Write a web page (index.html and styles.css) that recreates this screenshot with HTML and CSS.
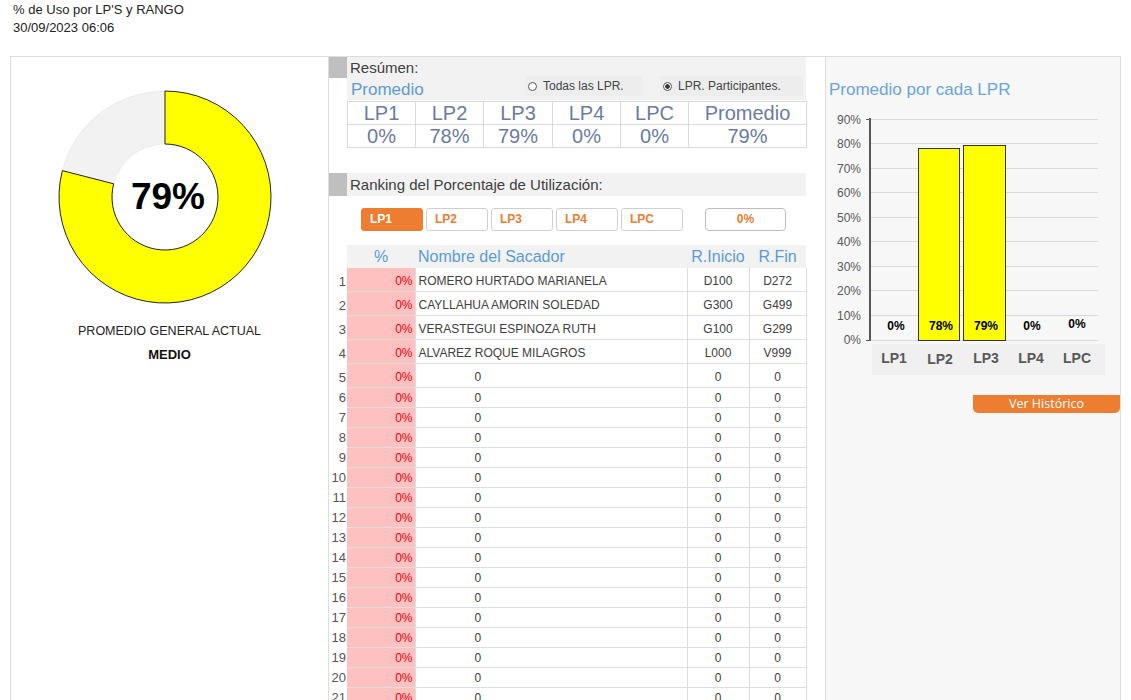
FILE: index.html
```html
<!DOCTYPE html>
<html lang="es">
<head>
<meta charset="utf-8">
<title>% de Uso por LP'S y RANGO</title>
<link rel="stylesheet" href="styles.css">
</head>
<body>
<div class="top">
  <div>% de Uso por LP'S y RANGO</div>
  <div>30/09/2023 06:06</div>
</div>
<div class="board">
  <div class="left">
    <div class="donut-wrap">
      <svg class="donut" width="216" height="216" viewBox="-1 -1 216 216">
        <path d="M4.33,80.64 A106,106 0 0 1 107,1 L107,54 A53,53 0 0 0 55.66,93.82 Z" fill="#f2f2f2" stroke="#e4e4e4" stroke-width="0.6"/>
        <path d="M107,1 A106,106 0 1 1 4.33,80.64 L55.66,93.82 A53,53 0 1 0 107,54 Z" fill="#ffff00" stroke="#222" stroke-width="1"/>
      </svg>
      <div class="donut-val">79%</div>
    </div>
    <div class="lbl1">PROMEDIO GENERAL ACTUAL</div>
    <div class="lbl2">MEDIO</div>
  </div>

  <div class="mid">
    <div class="sec-head">
      <div class="stripe"></div>
      <div class="sec-title">Resúmen:</div>
    </div>
    <div class="sub">
      <div class="prom-label">Promedio</div>
      <div class="radio-box rb1"><span class="radio"></span>Todas las LPR.</div>
      <div class="radio-box rb2"><span class="radio checked"></span>LPR. Participantes.</div>
    </div>
    <table class="summary">
      <colgroup>
        <col class="s1"><col class="s1"><col class="s2"><col class="s1"><col class="s1"><col class="s3">
      </colgroup>
      <tr><td>LP1</td><td>LP2</td><td>LP3</td><td>LP4</td><td>LPC</td><td>Promedio</td></tr>
      <tr><td>0%</td><td>78%</td><td>79%</td><td>0%</td><td>0%</td><td>79%</td></tr>
    </table>

    <div class="sec-head rank-head">
      <div class="stripe"></div>
      <div class="sec-title">Ranking del Porcentaje de Utilización:</div>
    </div>
    <div class="btns">
      <div class="btn active">LP1</div>
      <div class="btn">LP2</div>
      <div class="btn">LP3</div>
      <div class="btn">LP4</div>
      <div class="btn">LPC</div>
      <div class="btn total">0%</div>
    </div>

    <table class="rank">
      <colgroup>
        <col class="c-idx"><col class="c-pct"><col class="c-name"><col class="c-ri"><col class="c-rf">
      </colgroup>
      <tr class="head">
        <th class="idx"></th><th class="h-pct">%</th><th class="h-name">Nombre del Sacador</th><th>R.Inicio</th><th>R.Fin</th>
      </tr>
      <tr class="tall"><td class="idx">1</td><td class="pct">0%</td><td class="name">ROMERO HURTADO MARIANELA</td><td class="rc">D100</td><td class="rc">D272</td></tr>
      <tr class="tall"><td class="idx">2</td><td class="pct">0%</td><td class="name">CAYLLAHUA AMORIN SOLEDAD</td><td class="rc">G300</td><td class="rc">G499</td></tr>
      <tr class="tall"><td class="idx">3</td><td class="pct">0%</td><td class="name">VERASTEGUI ESPINOZA RUTH</td><td class="rc">G100</td><td class="rc">G299</td></tr>
      <tr class="tall"><td class="idx">4</td><td class="pct">0%</td><td class="name">ALVAREZ ROQUE MILAGROS</td><td class="rc">L000</td><td class="rc">V999</td></tr>
      <tr class="tall"><td class="idx">5</td><td class="pct">0%</td><td class="name empty">0</td><td class="rc">0</td><td class="rc">0</td></tr>
      <tr><td class="idx">6</td><td class="pct">0%</td><td class="name empty">0</td><td class="rc">0</td><td class="rc">0</td></tr>
      <tr><td class="idx">7</td><td class="pct">0%</td><td class="name empty">0</td><td class="rc">0</td><td class="rc">0</td></tr>
      <tr><td class="idx">8</td><td class="pct">0%</td><td class="name empty">0</td><td class="rc">0</td><td class="rc">0</td></tr>
      <tr><td class="idx">9</td><td class="pct">0%</td><td class="name empty">0</td><td class="rc">0</td><td class="rc">0</td></tr>
      <tr><td class="idx">10</td><td class="pct">0%</td><td class="name empty">0</td><td class="rc">0</td><td class="rc">0</td></tr>
      <tr><td class="idx">11</td><td class="pct">0%</td><td class="name empty">0</td><td class="rc">0</td><td class="rc">0</td></tr>
      <tr><td class="idx">12</td><td class="pct">0%</td><td class="name empty">0</td><td class="rc">0</td><td class="rc">0</td></tr>
      <tr><td class="idx">13</td><td class="pct">0%</td><td class="name empty">0</td><td class="rc">0</td><td class="rc">0</td></tr>
      <tr><td class="idx">14</td><td class="pct">0%</td><td class="name empty">0</td><td class="rc">0</td><td class="rc">0</td></tr>
      <tr><td class="idx">15</td><td class="pct">0%</td><td class="name empty">0</td><td class="rc">0</td><td class="rc">0</td></tr>
      <tr><td class="idx">16</td><td class="pct">0%</td><td class="name empty">0</td><td class="rc">0</td><td class="rc">0</td></tr>
      <tr><td class="idx">17</td><td class="pct">0%</td><td class="name empty">0</td><td class="rc">0</td><td class="rc">0</td></tr>
      <tr><td class="idx">18</td><td class="pct">0%</td><td class="name empty">0</td><td class="rc">0</td><td class="rc">0</td></tr>
      <tr><td class="idx">19</td><td class="pct">0%</td><td class="name empty">0</td><td class="rc">0</td><td class="rc">0</td></tr>
      <tr><td class="idx">20</td><td class="pct">0%</td><td class="name empty">0</td><td class="rc">0</td><td class="rc">0</td></tr>
      <tr><td class="idx">21</td><td class="pct">0%</td><td class="name empty">0</td><td class="rc">0</td><td class="rc">0</td></tr>
      <tr><td class="idx">22</td><td class="pct">0%</td><td class="name empty">0</td><td class="rc">0</td><td class="rc">0</td></tr>
      <tr><td class="idx">23</td><td class="pct">0%</td><td class="name empty">0</td><td class="rc">0</td><td class="rc">0</td></tr>
    </table>
  </div>

  <div class="gap"></div>

  <div class="right">
    <div class="chart-title">Promedio por cada LPR</div>
    <svg class="chart" width="294" height="280" viewBox="1 0 294 280">
      <g stroke="#d9d9d9" stroke-width="1">
        <line x1="45" x2="273" y1="19.5" y2="19.5"/>
        <line x1="45" x2="273" y1="43.5" y2="43.5"/>
        <line x1="45" x2="273" y1="68.5" y2="68.5"/>
        <line x1="45" x2="273" y1="92.5" y2="92.5"/>
        <line x1="45" x2="273" y1="117.5" y2="117.5"/>
        <line x1="45" x2="273" y1="141.5" y2="141.5"/>
        <line x1="45" x2="273" y1="166.5" y2="166.5"/>
        <line x1="45" x2="273" y1="190.5" y2="190.5"/>
        <line x1="45" x2="273" y1="215.5" y2="215.5"/>
        <line x1="45" x2="273" y1="240.5" y2="240.5"/>
      </g>
      <g font-family="Liberation Sans, Arial, sans-serif" font-size="12" fill="#595959" text-anchor="end">
        <text x="36" y="24">90%</text>
        <text x="36" y="48">80%</text>
        <text x="36" y="73">70%</text>
        <text x="36" y="97">60%</text>
        <text x="36" y="122">50%</text>
        <text x="36" y="146">40%</text>
        <text x="36" y="171">30%</text>
        <text x="36" y="195">20%</text>
        <text x="36" y="220">10%</text>
        <text x="36" y="244">0%</text>
      </g>
      <g stroke="#595959" stroke-width="1">
        <line x1="41" x2="45" y1="19.5" y2="19.5"/>
        <line x1="41" x2="45" y1="240.5" y2="240.5"/>
      </g>
      <line x1="45" x2="45" y1="18" y2="241" stroke="#595959" stroke-width="2"/>
      <rect x="93.5" y="48.5" width="41" height="192" fill="#ffff00" stroke="#333" stroke-width="1"/>
      <rect x="138.5" y="45.5" width="42" height="195" fill="#ffff00" stroke="#333" stroke-width="1"/>
      <g font-family="Liberation Sans, Arial, sans-serif" font-size="12" font-weight="bold" fill="#000" text-anchor="middle">
        <text x="71" y="230">0%</text>
        <text x="116" y="230">78%</text>
        <text x="161" y="230">79%</text>
        <text x="207" y="230">0%</text>
        <text x="252" y="228">0%</text>
      </g>
      <rect x="47" y="244" width="233" height="31" fill="#f0f0f0"/>
      <g font-family="Liberation Sans, Arial, sans-serif" font-size="14" font-weight="bold" fill="#595959" text-anchor="middle">
        <text x="69" y="263">LP1</text>
        <text x="115" y="264">LP2</text>
        <text x="161" y="263">LP3</text>
        <text x="206" y="263">LP4</text>
        <text x="252" y="263">LPC</text>
      </g>
    </svg>
    <div class="hist">Ver Histórico</div>
  </div>
</div>
</body>
</html>
```

FILE: styles.css
```css
body {
  margin: 0;
  font-family: "Liberation Sans", Arial, sans-serif;
  color: #333;
  background: #fff;
}

.top {
  padding: 1px 13px;
  font-size: 13px;
  line-height: 18px;
  color: #222;
}

.board {
  margin: 18px 0 0 10px;
  width: 1109px;
  border: 1px solid #ddd;
  border-bottom: none;
  display: flex;
  align-items: stretch;
}

/* left panel */
.left {
  width: 317px;
  flex: none;
}

.donut-wrap {
  position: relative;
  width: 216px;
  height: 216px;
  margin: 32px 0 0 46px;
}

.donut {
  display: block;
}

.donut-val {
  position: absolute;
  left: 0;
  top: 0;
  width: 216px;
  height: 216px;
  display: flex;
  align-items: center;
  justify-content: center;
  font-size: 37px;
  font-weight: bold;
  color: #000;
  padding-left: 6px;
  box-sizing: border-box;
}

.lbl1 {
  margin-top: 17px;
  text-align: center;
  font-size: 12.5px;
  line-height: 18px;
  color: #222;
}

.lbl2 {
  margin-top: 6px;
  text-align: center;
  font-size: 13px;
  line-height: 18px;
  font-weight: bold;
  color: #111;
}

/* middle */
.mid {
  width: 477px;
  flex: none;
  border-left: 1px solid #ddd;
}

.sec-head {
  display: flex;
  height: 21px;
}

.stripe {
  width: 18px;
  flex: none;
  background: #bfbfbf;
}

.sec-title {
  flex: 1;
  background: #f2f2f2;
  font-size: 15px;
  line-height: 21px;
  padding-left: 3px;
  color: #404040;
}

.rank-head {
  margin-top: 25px;
  height: 23px;
}

.rank-head .sec-title {
  line-height: 24px;
}

.sub {
  margin-left: 18px;
  height: 22px;
  background: #f2f2f2;
  display: flex;
  align-items: center;
}

.prom-label {
  width: 174px;
  padding-left: 4px;
  font-size: 17px;
  color: #5b9bd5;
  line-height: 22px;
  margin-top: 2px;
}

.radio-box {
  display: flex;
  align-items: center;
  height: 20px;
  margin-bottom: 6px;
  background: #ededed;
  font-size: 12px;
  color: #444;
}

.rb1 {
  width: 118px;
}

.rb2 {
  width: 143px;
  margin-left: 17px;
}

.radio {
  width: 9px;
  height: 9px;
  border: 1px solid #555;
  border-radius: 50%;
  background: #fff;
  margin: 0 6px 0 3px;
  box-sizing: border-box;
  flex: none;
}

.radio.checked {
  background: radial-gradient(circle, #333 0 2px, #fff 2.5px);
}

.summary {
  margin-left: 18px;
  width: 459px;
  border-collapse: collapse;
  table-layout: fixed;
  margin-top: 1px;
}

.s1 { width: 68px; }
.s2 { width: 69px; }
.s3 { width: 118px; }

.summary td {
  border: 1px solid #d9d9d9;
  height: 22px;
  padding: 0;
  text-align: center;
  font-size: 20px;
  line-height: 22px;
  color: #6a7ba3;
}

/* buttons */
.btns {
  display: flex;
  gap: 3px;
  margin: 12px 0 0 32px;
}

.btn {
  width: 62px;
  height: 23px;
  box-sizing: border-box;
  border: 1px solid #cfcfcf;
  border-radius: 3px;
  background: #fff;
  color: #ed7d31;
  font-size: 12px;
  font-weight: bold;
  line-height: 21px;
  padding-left: 8px;
}

.btn.active {
  background: #ed7d31;
  border-color: #ed7d31;
  color: #fff;
}

.btn.total {
  width: 81px;
  margin-left: 19px;
  border-color: #bdbdbd;
  border-radius: 4px;
  padding-left: 0;
  text-align: center;
}

/* ranking table */
.rank {
  margin-top: 14px;
  width: 477px;
  border-collapse: collapse;
  table-layout: fixed;
}

.c-idx { width: 18px; }
.c-pct { width: 68px; }
.c-name { width: 272px; }
.c-ri { width: 62px; }
.c-rf { width: 57px; }

.rank th {
  height: 23px;
  padding: 0;
  background: #f2f2f2;
  font-weight: normal;
  font-size: 16px;
  color: #5b9bd5;
  text-align: center;
}

.rank th.idx {
  background: #fff;
}

.rank th.h-name {
  text-align: left;
  padding-left: 3px;
}

.rank td {
  height: 19px;
  padding: 0;
  border-bottom: 1px solid #dedede;
  font-size: 12px;
  color: #404040;
}

.rank tr.tall td {
  height: 20px;
  padding-top: 3px;
}

.rank td.idx {
  border-bottom: none;
  text-align: right;
  padding-right: 1px;
  font-size: 13px;
  color: #555;
}

.rank td.pct {
  background: #ffc0c0;
  color: #e8000b;
  text-align: right;
  padding-right: 2px;
}

.rank td.name {
  border-left: 1px solid #dedede;
  padding-left: 3px;
}

.rank td.name.empty {
  padding-left: 59px;
}

.rank td.rc {
  border-left: 1px solid #dedede;
  border-right: 1px solid #dedede;
  text-align: center;
}

.gap {
  width: 19px;
  flex: none;
}

/* right panel */
.right {
  width: 294px;
  flex: none;
  border-left: 1px solid #ddd;
  background: #f7f7f7;
}

.chart-title {
  margin-top: 23px;
  padding-left: 3px;
  font-size: 17px;
  line-height: 20px;
  color: #69a4dc;
}

.chart {
  display: block;
}

.hist {
  margin: 15px 0 0 auto;
  width: 147px;
  height: 18px;
  background: #ed7d31;
  color: #fff;
  font-family: "Open Sans", "Liberation Sans", sans-serif;
  font-size: 12.5px;
  line-height: 18px;
  text-align: center;
  border-radius: 0 0 5px 5px;
}
```
